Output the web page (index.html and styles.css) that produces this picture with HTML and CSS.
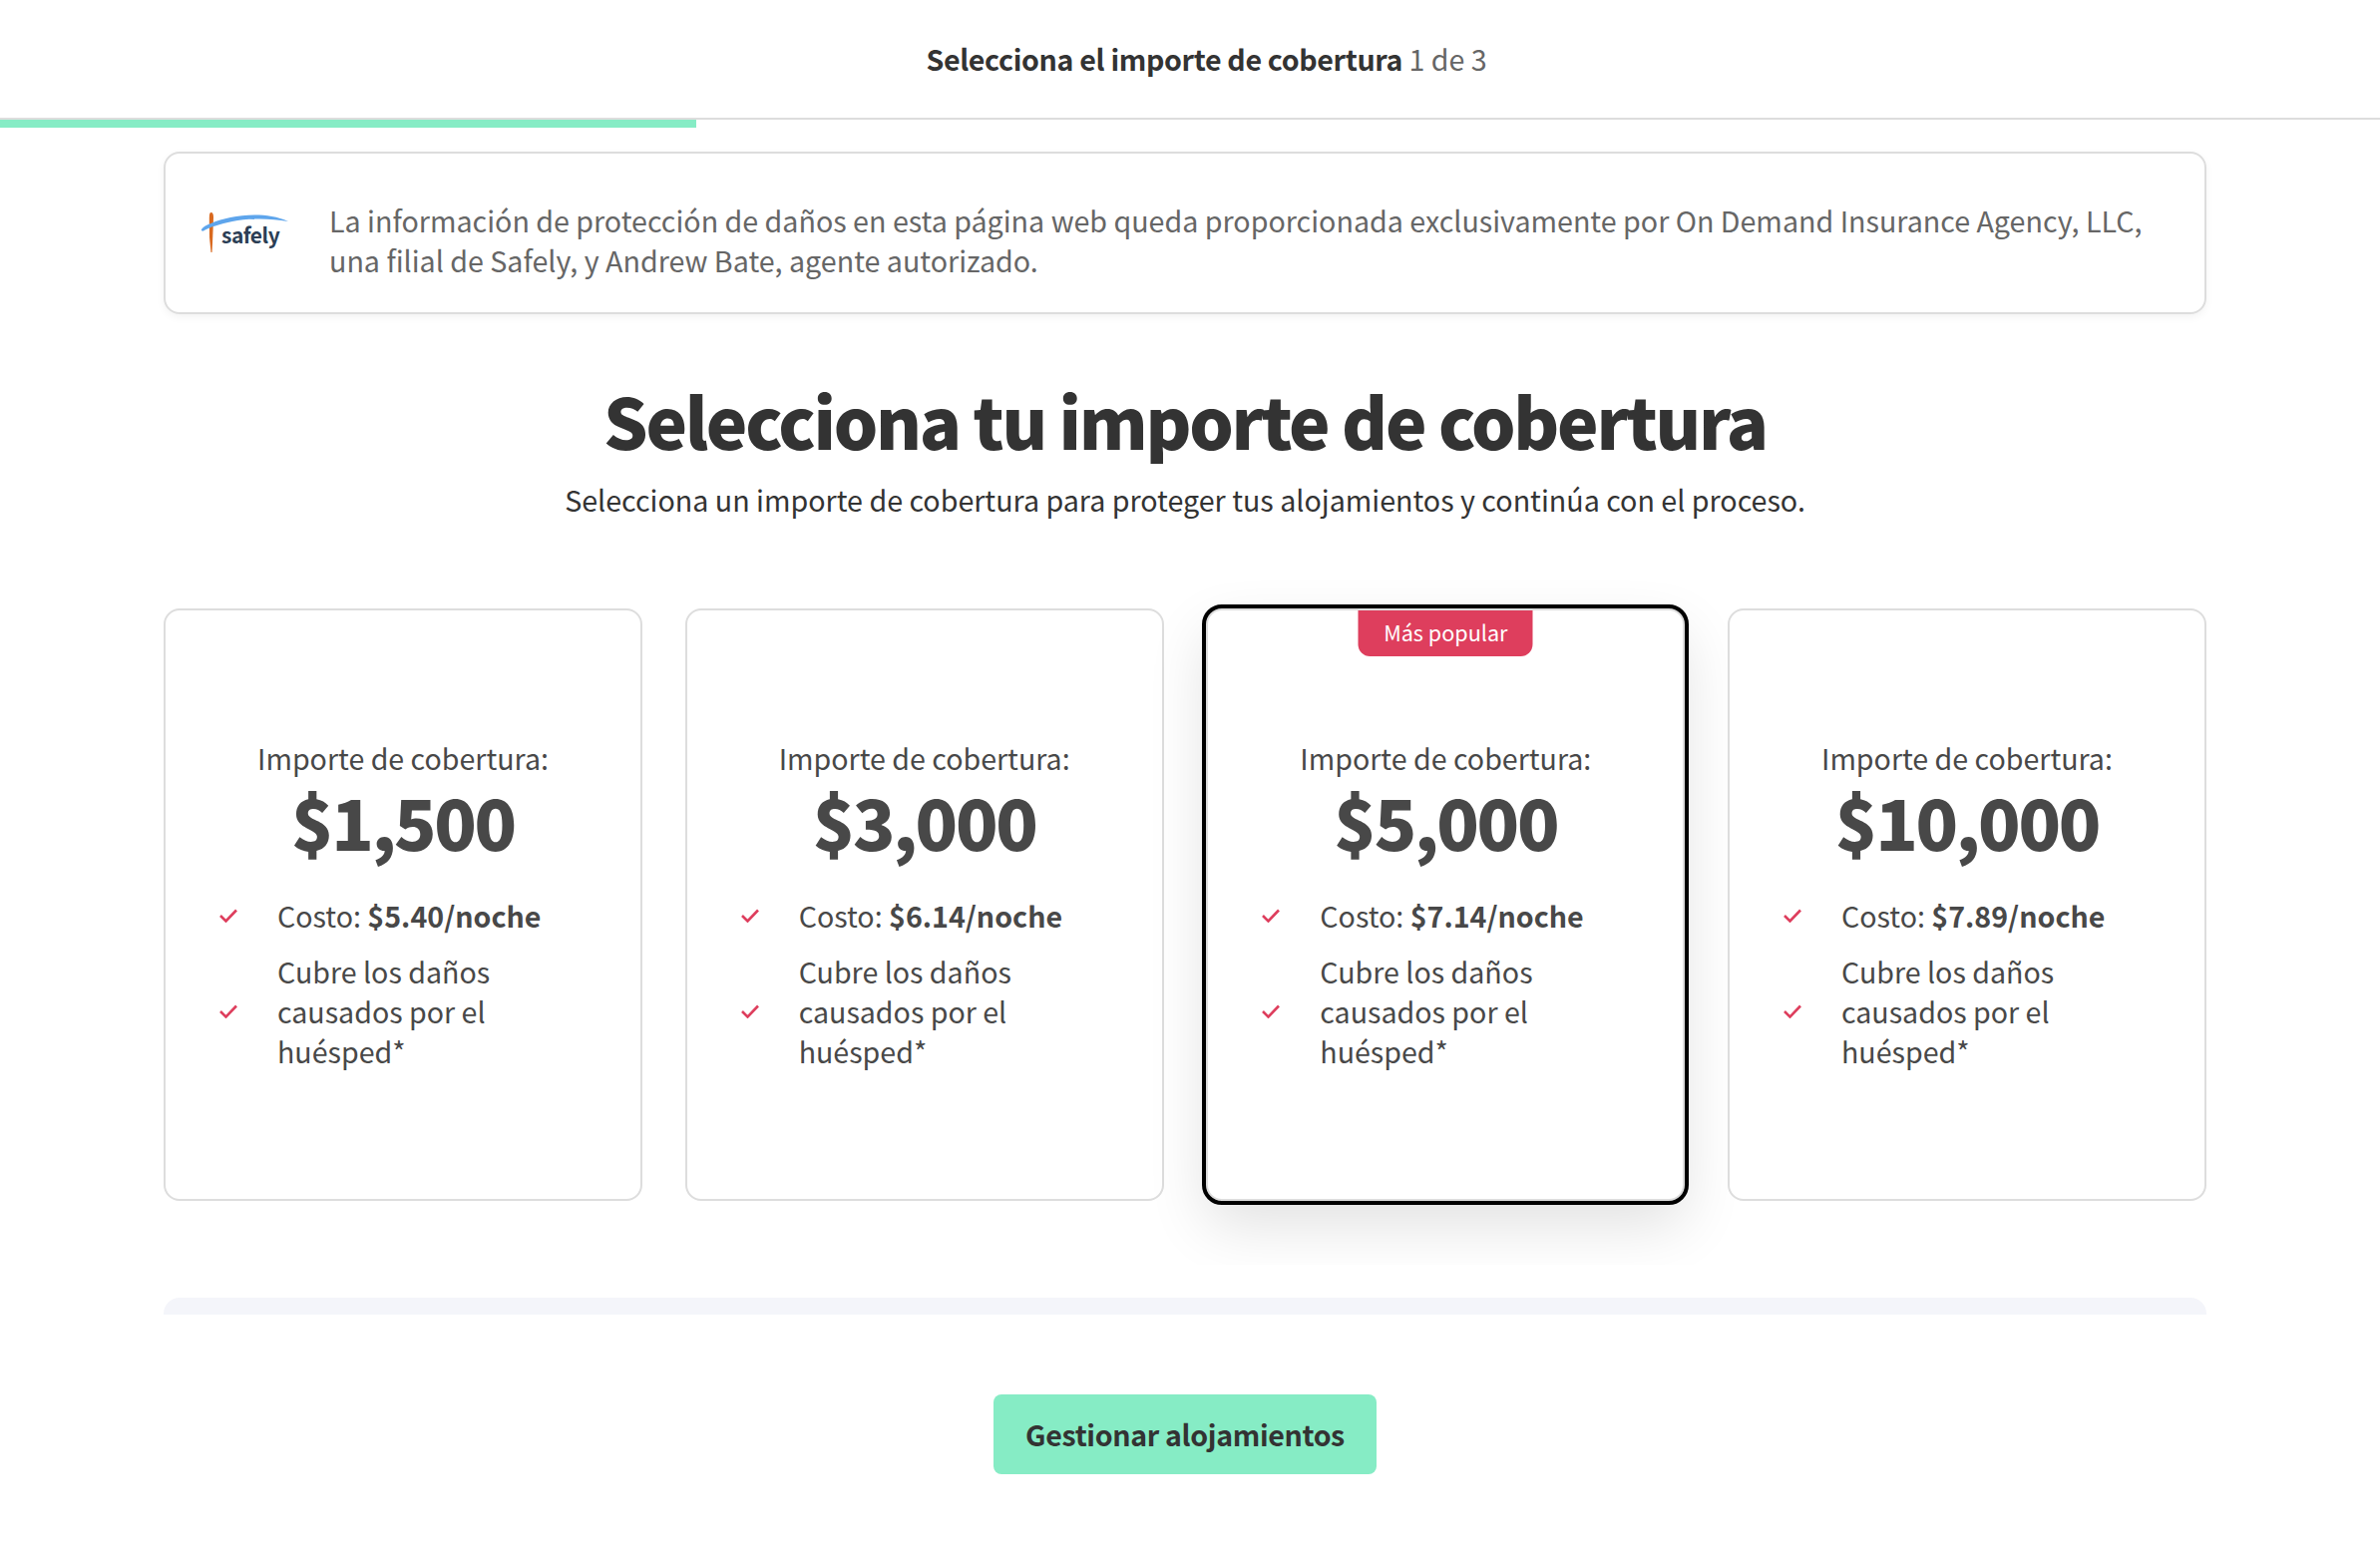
FILE: index.html
```html
<!DOCTYPE html>
<html lang="es">
<head>
<meta charset="utf-8">
<title>Selecciona tu importe de cobertura</title>
<link rel="stylesheet" href="styles.css">
</head>
<body>
<header class="topbar">
  <p class="step"><strong>Selecciona el importe de cobertura</strong> <span>1 de 3</span></p>
</header>
<div class="progress"><div class="progress-fill"></div></div>
<main class="page">
  <section class="notice">
    <svg class="logo" width="100" height="48" viewBox="0 0 100 48" aria-label="safely">
      <path class="logo-stem" d="M13.500 3 C15.500 3 16 5 16 8 L15.500 22 L15 34 L14.500 43 L13.500 43 L12 28 L11.800 10 C11.800 6 12 3 13.500 3 Z"/>
      <path class="logo-swoosh" d="M4 20 C6 16 19 11 33 8 C51 4.500 73 4 91 12 C73 8.500 51 8.500 35 12 C23 14.500 11 18 6 21.500 C4.500 22 3.500 21 4 20 Z"/>
      <text class="logo-text" x="24" y="34">safely</text>
    </svg>
    <p class="notice-text">La información de protección de daños en esta página web queda proporcionada exclusivamente por On Demand Insurance Agency, LLC, una filial de Safely, y Andrew Bate, agente autorizado.</p>
  </section>
  <h1 class="title">Selecciona tu importe de cobertura</h1>
  <p class="subtitle">Selecciona un importe de cobertura para proteger tus alojamientos y continúa con el proceso.</p>
  <div class="plans-clip">
    <div class="plans">
      <article class="plan">
        <p class="plan-label">Importe de cobertura:</p>
        <p class="plan-price">$1,500</p>
        <ul class="features">
          <li><svg class="check" viewBox="0 0 18 14"><path d="M1 7 L6.500 12.500 L17 1.500"/></svg><span>Costo: <b>$5.40/noche</b></span></li>
          <li><svg class="check" viewBox="0 0 18 14"><path d="M1 7 L6.500 12.500 L17 1.500"/></svg><span>Cubre los daños causados por el huésped*</span></li>
        </ul>
      </article>
      <article class="plan">
        <p class="plan-label">Importe de cobertura:</p>
        <p class="plan-price">$3,000</p>
        <ul class="features">
          <li><svg class="check" viewBox="0 0 18 14"><path d="M1 7 L6.500 12.500 L17 1.500"/></svg><span>Costo: <b>$6.14/noche</b></span></li>
          <li><svg class="check" viewBox="0 0 18 14"><path d="M1 7 L6.500 12.500 L17 1.500"/></svg><span>Cubre los daños causados por el huésped*</span></li>
        </ul>
      </article>
      <article class="plan plan-selected">
        <div class="badge">Más popular</div>
        <p class="plan-label">Importe de cobertura:</p>
        <p class="plan-price">$5,000</p>
        <ul class="features">
          <li><svg class="check" viewBox="0 0 18 14"><path d="M1 7 L6.500 12.500 L17 1.500"/></svg><span>Costo: <b>$7.14/noche</b></span></li>
          <li><svg class="check" viewBox="0 0 18 14"><path d="M1 7 L6.500 12.500 L17 1.500"/></svg><span>Cubre los daños causados por el huésped*</span></li>
        </ul>
      </article>
      <article class="plan">
        <p class="plan-label">Importe de cobertura:</p>
        <p class="plan-price">$10,000</p>
        <ul class="features">
          <li><svg class="check" viewBox="0 0 18 14"><path d="M1 7 L6.500 12.500 L17 1.500"/></svg><span>Costo: <b>$7.89/noche</b></span></li>
          <li><svg class="check" viewBox="0 0 18 14"><path d="M1 7 L6.500 12.500 L17 1.500"/></svg><span>Cubre los daños causados por el huésped*</span></li>
        </ul>
      </article>
    </div>
  </div>
  <div class="panel-edge"></div>
  <div class="actions"><button class="cta" type="button">Gestionar alojamientos</button></div>
</main>
</body>
</html>
```
FILE: styles.css
```css
* { box-sizing: border-box; }
html, body { margin: 0; padding: 0; background: #fff; }
body {
  font-family: "Noto Sans CJK JP", "Noto Sans", "Liberation Sans", sans-serif;
  color: #333;
  font-size: 28.6px;
  line-height: 40px;
}
p, h1, ul { margin: 0; padding: 0; }

.topbar {
  height: 120px;
  border-bottom: 2px solid #dddddd;
  display: flex;
  justify-content: center;
  align-items: center;
  padding-left: 33px;
}
.step { font-size: 28.6px; line-height: 40px; }
.step strong { font-weight: 700; color: #333; letter-spacing: -0.34px; }
.step span { color: #666; }

.progress { height: 8px; }
.progress-fill { width: 698px; height: 8px; background: #86ecc5; }

.page { width: 2048px; margin-left: 164px; }

.notice {
  margin-top: 24px;
  height: 163px;
  border: 2px solid #dddddd;
  border-radius: 16px;
  box-shadow: 0 3px 8px rgba(0, 0, 0, 0.05);
  display: flex;
  align-items: center;
  padding: 0 40px 0 32px;
  gap: 32px;
}
.logo { flex: none; }
.logo-stem { fill: #d9691f; }
.logo-swoosh { fill: #5ea5ec; }
.logo-text {
  font-size: 21px;
  font-weight: 700;
  fill: #2b3e55;
  letter-spacing: -0.5px;
}
.notice-text {
  color: #666;
  font-size: 28.65px;
  line-height: 40px;
  padding-top: 14px;
}

.title {
  margin-top: 61px;
  text-align: center;
  font-size: 70px;
  line-height: 90px;
  font-weight: 900;
  letter-spacing: -2.3px;
  color: #333;
}
.subtitle {
  margin-top: 15px;
  text-align: center;
  font-size: 28.65px;
  line-height: 40px;
  color: #333;
}

.plans-clip {
  margin-top: 23px;
  padding: 66px 0 64px;
  overflow: hidden;
}
.plans {
  display: grid;
  grid-template-columns: repeat(4, 480px);
  justify-content: space-between;
}
.plan {
  position: relative;
  height: 594px;
  padding: 128px 54px 0;
  border: 2px solid #dddddd;
  border-radius: 16px;
  background: #fff;
  color: #484848;
}
.plan-selected {
  outline: 4px solid #000;
  outline-offset: 0;
  box-shadow: 0 24px 60px rgba(0, 0, 0, 0.12);
}
.badge {
  position: absolute;
  top: 0;
  left: 50%;
  transform: translateX(-50%);
  width: 175px;
  height: 46px;
  border-radius: 0 0 12px 12px;
  background: #de3e5d;
  color: #fff;
  font-size: 21.6px;
  line-height: 44px;
  text-align: center;
}
.plan-label { text-align: center; font-size: 28.6px; line-height: 40px; }
.plan-price {
  text-align: center;
  font-size: 70px;
  line-height: 86px;
  font-weight: 900;
  letter-spacing: -2.3px;
}
.features { list-style: none; margin-top: 32px; }
.features li {
  display: flex;
  align-items: center;
  margin-bottom: 16px;
}
.features b { font-weight: 700; }
.check {
  flex: none;
  width: 18px;
  height: 14px;
  margin-right: 40px;
  fill: none;
  stroke: #de3e5d;
  stroke-width: 2.6;
}

.panel-edge {
  margin-top: 33px;
  height: 17px;
  background: #f4f5fa;
  border-radius: 16px 16px 0 0;
}

.actions {
  margin-top: 80px;
  display: flex;
  justify-content: center;
}
.cta {
  width: 384px;
  height: 80px;
  border: 0;
  padding: 0 0 2px;
  border-radius: 8px;
  background: #86ecc5;
  color: #333;
  font-family: inherit;
  font-size: 28.6px;
  font-weight: 700;
  letter-spacing: -0.35px;
}
```
